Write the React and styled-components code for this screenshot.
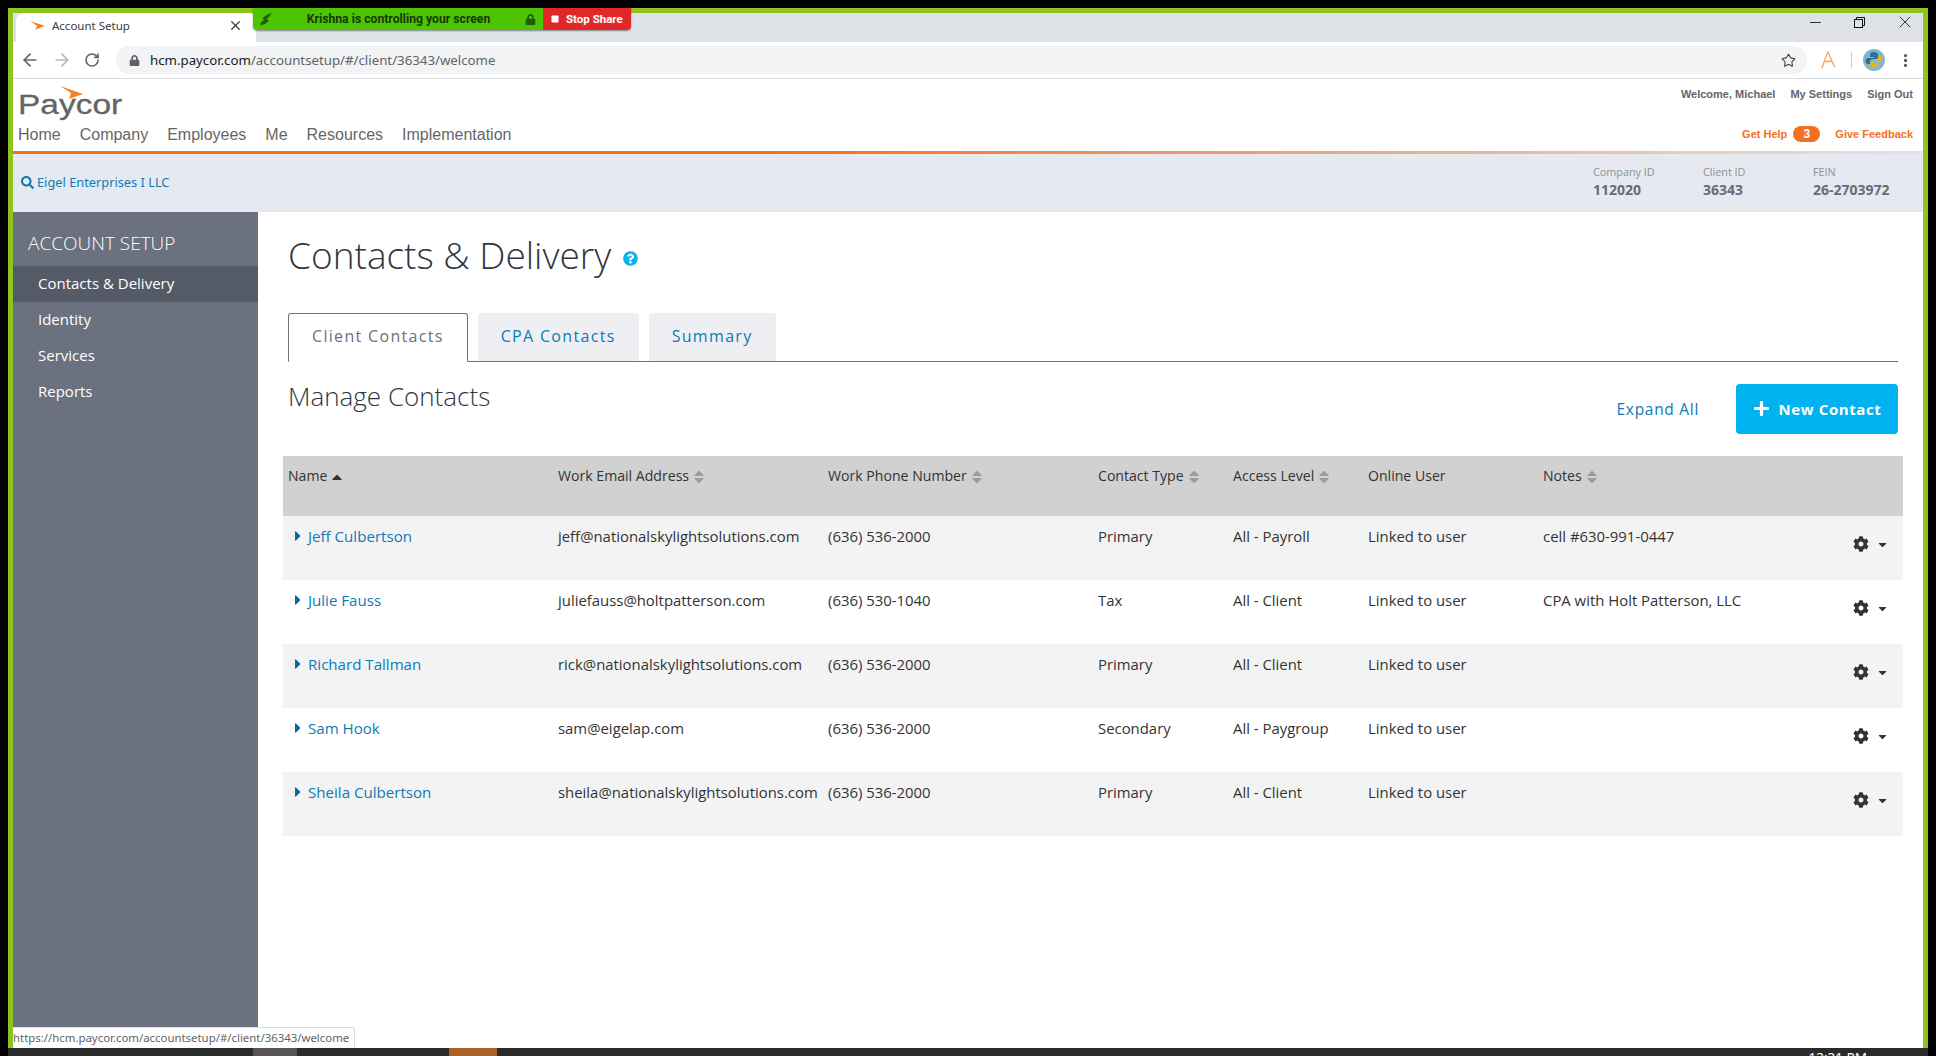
import React from 'react'
import styled, { createGlobalStyle } from 'styled-components'
import { FaCog, FaSearch, FaLock, FaQuestionCircle, FaPlus, FaCaretRight, FaCaretDown, FaCaretUp, FaStop } from 'react-icons/fa'
import { ArrowLeft, ArrowRight, RotateCw, Star, Minus, X, EllipsisVertical } from 'lucide-react'

const GlobalStyle = createGlobalStyle`
  html, body { margin: 0; padding: 0; background: #000; overflow: hidden; }
  * { box-sizing: border-box; }
  body { font-family: "Open Sans", "Noto Sans", sans-serif; }
`

const Frame = styled.div`
  position: relative;
  width: 1936px;
  height: 1056px;
  background: #000;
  padding: 8px 8px 0;
  display: flex;
  flex-direction: column;
`
const Screen = styled.div`
  flex: 1;
  min-height: 0;
  border: 5px solid #8fc31f;
  border-bottom: 0;
  background: #fff;
  display: flex;
  flex-direction: column;
`
const TabStrip = styled.div`
  height: 29px;
  background: #dee1e6;
  display: flex;
  padding-left: 3px;
`
const BrowserTab = styled.div`
  width: 240px;
  background: #fff;
  border-radius: 8px 8px 0 0;
  display: flex;
  align-items: center;
  padding: 0 13px 4px 14px;
  font-size: 11.5px;
  color: #3c4043;
`
const TabTitle = styled.span`
  flex: 1;
  margin-left: 7px;
  font-family: "Noto Sans", sans-serif;
`
const WindowControls = styled.div`
  margin-left: auto;
  display: flex;
  gap: 30px;
  align-items: center;
  padding: 0 8px 11px 0;
  color: #111;
`
const Toolbar = styled.div`
  height: 37px;
  background: #fff;
  border-bottom: 1px solid #dadce0;
  display: flex;
  align-items: center;
  padding-left: 7px;
`
const NavButtons = styled.div`
  display: flex;
  align-items: center;
  gap: 12px;
  width: 96px;
`
const AddressBar = styled.div`
  width: 1691px;
  height: 28px;
  background: #f1f3f4;
  border-radius: 14px;
  display: flex;
  align-items: center;
  padding: 0 11px 0 13px;
  font-family: "Noto Sans", sans-serif;
  font-size: 13.25px;
  color: #5f6368;
`
const Host = styled.span`
  color: #202124;
`
const Url = styled.div`
  flex: 1;
  margin-left: 10px;
`
const ToolbarExtras = styled.div`
  flex: 1;
  display: flex;
  align-items: center;
  padding-left: 14px;
`
const Separator = styled.div`
  width: 1px;
  height: 16px;
  background: #ccc;
  margin: 0 11px 0 15px;
`
const Header = styled.header`
  height: 72px;
  padding: 6px 10px 0 5px;
  display: flex;
  justify-content: space-between;
  background: #fff;
`
const Brand = styled.div`
  display: flex;
  flex-direction: column;
`
const Logo = styled.div`
  position: relative;
  height: 38px;
  font-family: "Liberation Sans", Arial, sans-serif;
  font-size: 27px;
  line-height: 40px;
  color: #636466;
`
const LogoText = styled.span`
  display: inline-block;
  transform: scaleX(1.24);
  transform-origin: left center;
  -webkit-text-stroke: 0.3px #636466;
`
const LogoArrow = styled.svg`
  position: absolute;
  left: 42px;
  top: 1px;
`
const MainNav = styled.nav`
  display: flex;
  gap: 19px;
  font-family: "Liberation Sans", Arial, sans-serif;
  font-size: 16px;
  line-height: 24px;
  color: #666;
`
const HeaderRight = styled.div`
  display: flex;
  flex-direction: column;
  align-items: flex-end;
  font-family: "Liberation Sans", Arial, sans-serif;
  font-size: 11px;
  font-weight: 700;
`
const UserLinks = styled.div`
  display: flex;
  gap: 15px;
  color: #666;
  line-height: 18px;
`
const HelpLinks = styled.div`
  display: flex;
  align-items: center;
  color: #f37021;
  line-height: 16px;
  margin-top: 23px;
`
const Badge = styled.span`
  width: 27px;
  height: 16px;
  border-radius: 8px;
  background: #f37021;
  color: #fff;
  font-size: 12px;
  text-align: center;
  margin: 0 15px 0 6px;
`
const AccentLine = styled.div`
  height: 3px;
  background: linear-gradient(90deg, #f37021 0%, #f37021 40%, #e0e3e8 100%);
`
const SubHeader = styled.div`
  height: 58px;
  background: #e6e9f0;
  display: flex;
  align-items: center;
  justify-content: space-between;
  padding: 0 0 0 8px;
`
const ClientLink = styled.div`
  display: flex;
  align-items: center;
  gap: 3px;
  margin-top: -2px;
  color: #0f7ab5;
  font-size: 12.8px;
  font-family: "Noto Sans", sans-serif;
`
const IdBlocks = styled.div`
  display: flex;
  margin-top: -1px;
`
const IdBlock = styled.div`
  width: 110px;
`
const IdLabel = styled.div`
  font-size: 10.8px;
  line-height: 14px;
  color: #8a8f99;
`
const IdValue = styled.div`
  font-size: 14px;
  line-height: 22px;
  font-weight: 700;
  color: #666c78;
`
const Body = styled.div`
  flex: 1;
  min-height: 0;
  display: flex;
`
const Sidebar = styled.aside`
  width: 245px;
  background: #6b717e;
  color: #fff;
`
const SideTitle = styled.div`
  height: 54px;
  padding: 7px 0 0 15px;
  display: flex;
  align-items: center;
  font-size: 19px;
  font-weight: 300;
`
const SideItem = styled.div`
  height: 36px;
  display: flex;
  align-items: center;
  padding: 0 0 3px 25px;
  font-size: 15px;
  background: ${p => (p.$active ? '#545a66' : 'transparent')};
`
const Main = styled.main`
  flex: 1;
  min-width: 0;
  padding: 0 20px 0 25px;
`
const PageTitle = styled.h1`
  margin: 18px 0 0 5px;
  height: 83px;
  display: flex;
  align-items: flex-start;
  font-size: 37px;
  line-height: 50px;
  font-weight: 300;
  color: #2f3640;
`
const HelpIcon = styled.span`
  display: flex;
  color: #0cb0ee;
  margin: 21px 0 0 12px;
`
const Tabs = styled.div`
  display: flex;
  gap: 10px;
  margin: 0 5px;
  height: 49px;
  border-bottom: 1px solid #6b717e;
`
const Tab = styled.div`
  height: ${p => (p.$active ? '49px' : '48px')};
  padding: 0 23px 3px;
  display: flex;
  align-items: center;
  font-size: 16px;
  letter-spacing: 1.32px;
  border-radius: 3px 3px 0 0;
  color: ${p => (p.$active ? '#6b717e' : '#0f7ab5')};
  background: ${p => (p.$active ? '#fff' : '#eeeff3')};
  border: ${p => (p.$active ? '1px solid #6b717e' : '0')};
  border-bottom: ${p => (p.$active ? '1px solid #fff' : '0')};
`
const ManageRow = styled.div`
  display: flex;
  align-items: flex-start;
  justify-content: space-between;
  height: 94px;
  margin: 0 5px;
`
const ManageTitle = styled.h2`
  margin: 17px 0 0;
  font-size: 26px;
  line-height: 34px;
  font-weight: 300;
  color: #2f3640;
`
const ManageActions = styled.div`
  display: flex;
  align-items: center;
  gap: 37px;
  margin-top: 22px;
`
const ExpandLink = styled.span`
  color: #0f7ab5;
  font-size: 15.5px;
  letter-spacing: 0.7px;
  margin-bottom: 1px;
`
const NewButton = styled.div`
  width: 162px;
  height: 50px;
  padding-bottom: 1px;
  border-radius: 4px;
  background: #00b3f0;
  color: #fff;
  font-size: 15px;
  font-weight: 700;
  letter-spacing: 0.6px;
  display: flex;
  align-items: center;
  justify-content: center;
  gap: 9px;
`
const Table = styled.div`
  width: 1620px;
  font-size: 14.9px;
  color: #333;
`
const Columns = `270px 270px 270px 135px 135px 175px 1fr`
const HeadRow = styled.div`
  display: grid;
  grid-template-columns: ${Columns};
  height: 60px;
  background: #d1d1d1;
  font-size: 14.1px;
`
const HeadCell = styled.div`
  padding: 9px 5px 0;
  line-height: 22px;
  display: flex;
  align-items: flex-start;
  gap: 2px;
`
const SortIcon = styled.span`
  display: inline-flex;
  flex-direction: column;
  margin-top: ${p => (p.$up ? '4px' : '0')};
  color: ${p => (p.$up ? '#333' : '#9c9c9c')};
  line-height: 0;
  & svg + svg { margin-top: -9px; }
`
const Row = styled.div`
  display: grid;
  grid-template-columns: ${Columns};
  height: 64px;
  background: ${p => (p.$odd ? '#f3f3f3' : '#fff')};
`
const Cell = styled.div`
  padding: 9px 5px 0;
  line-height: 22px;
  white-space: nowrap;
`
const NameCell = styled(Cell)`
  display: flex;
  align-items: flex-start;
  gap: 2px;
  padding-left: 7px;
  font-size: 15.1px;
  color: #0f7ab5;
`
const Expander = styled.span`
  display: flex;
  margin-top: 3px;
  color: #0c6a9e;
`
const NotesCell = styled(Cell)`
  display: flex;
  justify-content: space-between;
  padding-right: 14px;
`
const RowMenu = styled.div`
  display: flex;
  align-items: center;
  gap: 7px;
  height: 16px;
  margin-top: 11px;
  color: #333;
`
const StatusBubble = styled.div`
  position: absolute;
  left: 13px;
  bottom: 8px;
  width: 342px;
  height: 21px;
  background: #fff;
  border: 1px solid #dadce0;
  border-left: 0;
  border-bottom: 0;
  border-radius: 0 3px 0 0;
  font-family: "Noto Sans", sans-serif;
  font-size: 11.4px;
  line-height: 19px;
  color: #5f6368;
  white-space: nowrap;
`
const Taskbar = styled.div`
  position: relative;
  height: 8px;
  background: #2b2b2b;
  overflow: hidden;
  display: flex;
  flex: none;
`
const TaskItem = styled.div`
  width: ${p => p.$w}px;
  margin-left: ${p => p.$ml}px;
  background: ${p => p.$bg};
`
const Clock = styled.div`
  position: absolute;
  right: 61px;
  top: 3px;
  font-family: "Noto Sans", sans-serif;
  font-size: 13.5px;
  line-height: 14px;
  color: #fff;
`
const ShareBar = styled.div`
  position: absolute;
  left: 253px;
  top: 8px;
  height: 22px;
  display: flex;
  font-family: Roboto, "Liberation Sans", sans-serif;
  font-size: 12.2px;
  font-weight: 700;
  border-radius: 0 0 4px 4px;
  overflow: hidden;
  box-shadow: 0 1px 2px rgba(0, 0, 0, .4);
`
const ShareStatus = styled.div`
  width: 290px;
  background: #4cc400;
  color: #173808;
  display: flex;
  align-items: center;
  justify-content: space-between;
  padding: 0 7px 0 7px;
`
const StopShare = styled.div`
  width: 88px;
  background: #e02828;
  color: #fff;
  display: flex;
  align-items: center;
  gap: 7px;
  padding-left: 8px;
  font-size: 11.5px;
`

const contacts = [
  { name: 'Jeff Culbertson', email: 'jeff@nationalskylightsolutions.com', phone: '(636) 536-2000', type: 'Primary', access: 'All - Payroll', notes: 'cell #630-991-0447' },
  { name: 'Julie Fauss', email: 'juliefauss@holtpatterson.com', phone: '(636) 530-1040', type: 'Tax', access: 'All - Client', notes: 'CPA with Holt Patterson, LLC' },
  { name: 'Richard Tallman', email: 'rick@nationalskylightsolutions.com', phone: '(636) 536-2000', type: 'Primary', access: 'All - Client', notes: '' },
  { name: 'Sam Hook', email: 'sam@eigelap.com', phone: '(636) 536-2000', type: 'Secondary', access: 'All - Paygroup', notes: '' },
  { name: 'Sheila Culbertson', email: 'sheila@nationalskylightsolutions.com', phone: '(636) 536-2000', type: 'Primary', access: 'All - Client', notes: '' },
]

const columns = ['Work Email Address', 'Work Phone Number', 'Contact Type', 'Access Level']

const SortBoth = () => (
  <SortIcon>
    <FaCaretUp size={16} />
    <FaCaretDown size={16} />
  </SortIcon>
)

const PythonAvatar = () => (
  <svg width="22" height="22" viewBox="0 0 22 22">
    <circle cx="11" cy="11" r="11" fill="#7fb7c9" />
    <path d="M11 3c-3 0-4 1-4 3v2h4v1H5c-2 0-2.500 2-2.500 3s.5 3 2.500 3h2v-2c0-2 1-3 3-3h3c1.500 0 2-1 2-2V6c0-2-2-3-4-3z" fill="#2f6d9e" />
    <path d="M11 19c3 0 4-1 4-3v-2h-4v-1h6c2 0 2.500-2 2.500-3s-.5-3-2.500-3h-2v2c0 2-1 3-3 3H9c-1.500 0-2 1-2 2v2c0 2 2 3 4 3z" fill="#e2b32c" />
  </svg>
)

const App = () => {
  return (
    <Frame>
      <GlobalStyle />
      <Screen>
        <TabStrip>
          <BrowserTab>
            <svg width="15" height="9" viewBox="0 0 23 13">
              <path d="M0 0 L23 7 L8 13 L11 7 Z" fill="#f58220" />
            </svg>
            <TabTitle>Account Setup</TabTitle>
            <X size={15} strokeWidth={2} />
          </BrowserTab>
          <WindowControls>
            <Minus size={17} strokeWidth={1.2} />
            <svg width="11" height="11" viewBox="0 0 11 11" fill="none" stroke="#111">
              <rect x="0.5" y="2.500" width="8" height="8" />
              <path d="M2.500 2.500V0.500H10.500V8.500H8.500" />
            </svg>
            <X size={20} strokeWidth={1} />
          </WindowControls>
        </TabStrip>
        <Toolbar>
          <NavButtons>
            <ArrowLeft size={20} color="#5f6368" strokeWidth={2} />
            <ArrowRight size={20} color="#b5b8bc" strokeWidth={2} />
            <RotateCw size={16} color="#5f6368" strokeWidth={2.4} />
          </NavButtons>
          <AddressBar>
            <FaLock size={11} color="#5f6368" />
            <Url><Host>hcm.paycor.com</Host>/accountsetup/#/client/36343/welcome</Url>
            <Star size={15} color="#444" strokeWidth={1.8} />
          </AddressBar>
          <ToolbarExtras>
            <svg width="15" height="18" viewBox="0 0 15 18">
              <path d="M1 17 C3 11 5 5 7 1 C9 5 11 11 14 16 M3 11 C6 10 9 10 12 11" fill="none" stroke="#f5a25d" strokeWidth="1.3" />
            </svg>
            <Separator />
            <PythonAvatar />
            <EllipsisVertical size={17} color="#555" strokeWidth={2.6} style={{ marginLeft: 12 }} />
          </ToolbarExtras>
        </Toolbar>
        <Header>
          <Brand>
            <Logo>
              <LogoArrow width="23" height="13" viewBox="0 0 23 13">
                <path d="M0 0 L23 8 L9 13 L11 7 Z" fill="#f58220" />
              </LogoArrow>
              <LogoText>Paycor</LogoText>
            </Logo>
            <MainNav>
              <span>Home</span>
              <span>Company</span>
              <span>Employees</span>
              <span>Me</span>
              <span>Resources</span>
              <span>Implementation</span>
            </MainNav>
          </Brand>
          <HeaderRight>
            <UserLinks>
              <span>Welcome, Michael</span>
              <span>My Settings</span>
              <span>Sign Out</span>
            </UserLinks>
            <HelpLinks>
              <span>Get Help</span>
              <Badge>3</Badge>
              <span>Give Feedback</span>
            </HelpLinks>
          </HeaderRight>
        </Header>
        <AccentLine />
        <SubHeader>
          <ClientLink>
            <FaSearch size={13} />
            <span>Eigel Enterprises I LLC</span>
          </ClientLink>
          <IdBlocks>
            <IdBlock>
              <IdLabel>Company ID</IdLabel>
              <IdValue>112020</IdValue>
            </IdBlock>
            <IdBlock>
              <IdLabel>Client ID</IdLabel>
              <IdValue>36343</IdValue>
            </IdBlock>
            <IdBlock>
              <IdLabel>FEIN</IdLabel>
              <IdValue>26-2703972</IdValue>
            </IdBlock>
          </IdBlocks>
        </SubHeader>
        <Body>
          <Sidebar>
            <SideTitle>ACCOUNT SETUP</SideTitle>
            <SideItem $active>Contacts &amp; Delivery</SideItem>
            <SideItem>Identity</SideItem>
            <SideItem>Services</SideItem>
            <SideItem>Reports</SideItem>
          </Sidebar>
          <Main>
            <PageTitle>
              Contacts &amp; Delivery
              <HelpIcon><FaQuestionCircle size={15} /></HelpIcon>
            </PageTitle>
            <Tabs>
              <Tab $active>Client Contacts</Tab>
              <Tab>CPA Contacts</Tab>
              <Tab>Summary</Tab>
            </Tabs>
            <ManageRow>
              <ManageTitle>Manage Contacts</ManageTitle>
              <ManageActions>
                <ExpandLink>Expand All</ExpandLink>
                <NewButton><FaPlus size={17} /> New Contact</NewButton>
              </ManageActions>
            </ManageRow>
            <Table>
              <HeadRow>
                <HeadCell>
                  Name
                  <SortIcon $up><FaCaretUp size={16} /></SortIcon>
                </HeadCell>
                {columns.map(c => (
                  <HeadCell key={c}>{c}<SortBoth /></HeadCell>
                ))}
                <HeadCell>Online User</HeadCell>
                <HeadCell>Notes<SortBoth /></HeadCell>
              </HeadRow>
              {contacts.map((c, i) => (
                <Row key={c.name} $odd={i % 2 === 0}>
                  <NameCell>
                    <Expander><FaCaretRight size={16} /></Expander>
                    {c.name}
                  </NameCell>
                  <Cell>{c.email}</Cell>
                  <Cell>{c.phone}</Cell>
                  <Cell>{c.type}</Cell>
                  <Cell>{c.access}</Cell>
                  <Cell>Linked to user</Cell>
                  <NotesCell>
                    <span>{c.notes}</span>
                    <RowMenu>
                      <FaCog size={16} />
                      <FaCaretDown size={13} />
                    </RowMenu>
                  </NotesCell>
                </Row>
              ))}
            </Table>
          </Main>
        </Body>
      </Screen>
      <Taskbar>
        <TaskItem $w={44} $ml={245} $bg="#555" />
        <TaskItem $w={48} $ml={152} $bg="#a8622a" />
        <Clock>12:31 PM</Clock>
      </Taskbar>
      <StatusBubble>https://hcm.paycor.com/accountsetup/#/client/36343/welcome</StatusBubble>
      <ShareBar>
        <ShareStatus>
          <svg width="12" height="12" viewBox="0 0 10 10">
            <path d="M10 0 C6 1 3 3 2 5 L4 5.500 C2 6.500 .5 8 0 10 C3 10 6 8.500 7.500 6 L5.500 5.500 C7 3.500 8.500 2 10 0 Z" fill="#1d5c0a" />
          </svg>
          <span>Krishna is controlling your screen</span>
          <FaLock size={11} color="#1d5c0a" />
        </ShareStatus>
        <StopShare><FaStop size={8} />Stop Share</StopShare>
      </ShareBar>
    </Frame>
  )
}

export default App
